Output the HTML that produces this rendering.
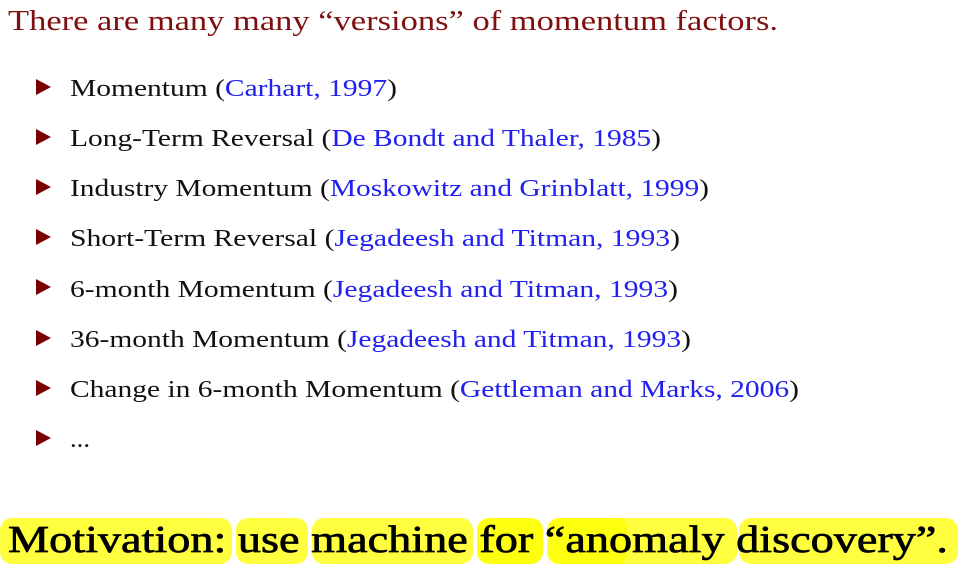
<!DOCTYPE html>
<html><head><meta charset="utf-8"><style>
html,body{margin:0;padding:0;background:#fff;width:968px;height:580px;overflow:hidden}
svg{display:block}
text{font-family:"Liberation Serif",serif}
</style></head><body>
<svg width="968" height="580" viewBox="0 0 968 580" xmlns="http://www.w3.org/2000/svg">
<text x="8" y="30" font-size="29" fill="#7f1010" textLength="770" lengthAdjust="spacingAndGlyphs">There are many many “versions” of momentum factors.</text>
<g fill="#7a0000">
<polygon points="36,79 51,87 36,95"/>
<polygon points="36,129 51,137 36,145"/>
<polygon points="36,179 51,187 36,195"/>
<polygon points="36,229 51,237 36,245"/>
<polygon points="36,279 51,287 36,295"/>
<polygon points="36,330 51,338 36,346"/>
<polygon points="36,380 51,388 36,396"/>
<polygon points="36,430 51,438 36,446"/>
</g>
<g font-size="24" fill="#111">
<text x="70" y="96" textLength="327" lengthAdjust="spacingAndGlyphs">Momentum (<tspan fill="#2020f0">Carhart, 1997</tspan>)</text>
<text x="70" y="146" textLength="591" lengthAdjust="spacingAndGlyphs">Long-Term Reversal (<tspan fill="#2020f0">De Bondt and Thaler, 1985</tspan>)</text>
<text x="70" y="196" textLength="639" lengthAdjust="spacingAndGlyphs">Industry Momentum (<tspan fill="#2020f0">Moskowitz and Grinblatt, 1999</tspan>)</text>
<text x="70" y="246" textLength="610" lengthAdjust="spacingAndGlyphs">Short-Term Reversal (<tspan fill="#2020f0">Jegadeesh and Titman, 1993</tspan>)</text>
<text x="70" y="297" textLength="608" lengthAdjust="spacingAndGlyphs">6-month Momentum (<tspan fill="#2020f0">Jegadeesh and Titman, 1993</tspan>)</text>
<text x="70" y="347" textLength="621" lengthAdjust="spacingAndGlyphs">36-month Momentum (<tspan fill="#2020f0">Jegadeesh and Titman, 1993</tspan>)</text>
<text x="70" y="397" textLength="729" lengthAdjust="spacingAndGlyphs">Change in 6-month Momentum (<tspan fill="#2020f0">Gettleman and Marks, 2006</tspan>)</text>
<text x="70" y="447" textLength="20" lengthAdjust="spacingAndGlyphs">...</text>
</g>
<g fill="#ffff40">
<rect x="0" y="518" width="232" height="46" rx="12"/>
<rect x="236" y="518" width="72" height="46" rx="12"/>
<rect x="312" y="518" width="161" height="46" rx="12"/>
<rect x="477" y="518" width="66" height="46" rx="12" fill="#ffff10"/>
<rect x="547" y="518" width="190" height="46" rx="12"/>
<rect x="549" y="518" width="78" height="46" rx="10" fill="#ffff10"/>
<rect x="739" y="518" width="219" height="46" rx="12"/>
</g>
<text x="8" y="552" font-size="38" fill="#000" stroke="#000" stroke-width="0.7" textLength="940" lengthAdjust="spacingAndGlyphs">Motivation: use machine for “anomaly discovery”.</text>
</svg>
</body></html>
